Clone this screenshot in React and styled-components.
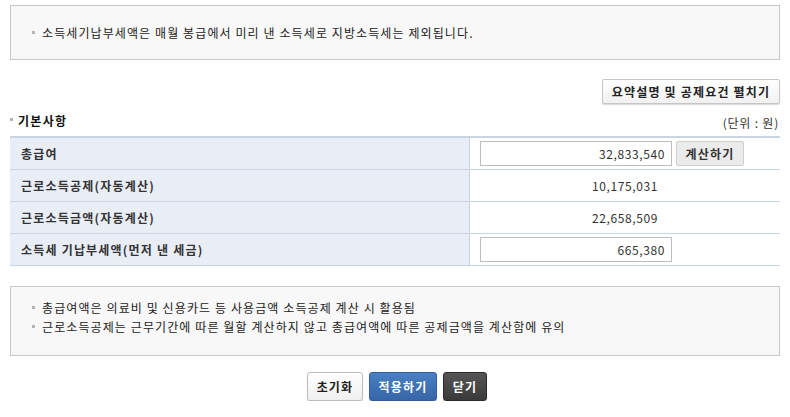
import React from "react";
import styled, { createGlobalStyle } from "styled-components";

const Global = createGlobalStyle`
  html, body { margin: 0; padding: 0; background: #fff; }
  body { font-family: "Noto Sans CJK KR", "Noto Sans", sans-serif; font-size: 12px; color: #333; }
  * { box-sizing: border-box; }
`;

const Page = styled.div`
  padding: 5px 10px 0 10px;
  width: 790px;
`;

const NoticeBox = styled.div`
  border: 1px solid #c8c8c8;
  background: #f8f8f8;
  padding: ${(p) => p.$pad || "17px 20px"};
  margin-top: ${(p) => p.$mt || 0}px;
  display: flex;
  flex-direction: column;
  gap: 2px;
`;

const Bullet = styled.div`
  position: relative;
  padding-left: 11px;
  line-height: 17px;
  font-size: 12px;
  color: #222;
  letter-spacing: 1.1px;
  &::before {
    content: "";
    position: absolute;
    left: 1px;
    top: 7px;
    width: 3px;
    height: 3px;
    background: #b4b4b4;
  }
`;

const ToolRow = styled.div`
  display: flex;
  justify-content: flex-end;
  margin-top: 19px;
`;

const GrayButton = styled.button`
  font-family: inherit;
  font-weight: bold;
  font-size: 12px;
  letter-spacing: 1.2px;
  color: #222;
  width: 178px;
  height: 25px;
  padding: 0;
  border: 1px solid #c6c6c6;
  border-radius: 2px;
  background: linear-gradient(#ffffff, #f1f1f1);
  box-shadow: 0 1px 1px rgba(0, 0, 0, 0.15);
  cursor: pointer;
`;

const HeadRow = styled.div`
  display: flex;
  justify-content: space-between;
  align-items: center;
  margin-top: 6px;
  height: 26px;
  padding-bottom: 5px;
`;

const Heading = styled.div`
  position: relative;
  padding-left: 8px;
  font-weight: bold;
  font-size: 12px;
  letter-spacing: 1.3px;
  color: #111;
  &::before {
    content: "";
    position: absolute;
    left: 0;
    top: 6px;
    width: 3px;
    height: 3px;
    background: #b4b4b4;
  }
`;

const Unit = styled.div`
  font-size: 12px;
  letter-spacing: 0.8px;
  color: #333;
  padding-top: 4px;
  padding-right: 1px;
`;

const Table = styled.div`
  display: grid;
  grid-template-columns: 460px 1fr;
  border-top: 2px solid #cbd4e1;
`;

const Label = styled.div`
  background: #e9edf6;
  border-right: 1px solid #c9d3e0;
  border-bottom: 1px solid #c9d3e0;
  height: 32px;
  display: flex;
  align-items: center;
  padding-left: 11px;
  font-weight: bold;
  font-size: 12px;
  letter-spacing: 1.2px;
  color: #333;
`;

const Cell = styled.div`
  border-bottom: 1px solid #c9d3e0;
  height: 32px;
  display: flex;
  align-items: center;
  justify-content: ${(p) => (p.$center ? "center" : "flex-start")};
  padding-left: ${(p) => (p.$center ? 0 : 10)}px;
  gap: 4px;
  font-size: 12px;
  letter-spacing: 0.6px;
  color: #333;
`;

const NumInput = styled.input`
  width: 192px;
  height: 25px;
  border: 1px solid #bdbdbd;
  text-align: right;
  padding: 0 6px;
  font-family: inherit;
  font-size: 12px;
  letter-spacing: 0.6px;
  color: #333;
  outline: none;
`;

const CalcButton = styled.button`
  font-family: inherit;
  font-weight: bold;
  font-size: 12px;
  letter-spacing: 1.2px;
  color: #333;
  width: 68px;
  height: 25px;
  padding: 0;
  border: 1px solid #cfcfcf;
  border-radius: 2px;
  background: #ebebeb;
  cursor: pointer;
`;

const Footer = styled.div`
  display: flex;
  justify-content: center;
  gap: 6px;
  margin-top: 16px;
  padding-left: 4px;
`;

const ActionButton = styled.button`
  font-family: inherit;
  font-weight: bold;
  font-size: 12px;
  letter-spacing: 1.2px;
  width: ${(p) => p.$w}px;
  height: 29px;
  padding: 0;
  border-radius: 3px;
  cursor: pointer;
  color: ${(p) => (p.$variant === "light" ? "#222" : "#fff")};
  border: 1px solid
    ${(p) =>
      p.$variant === "blue" ? "#2f5f9e" : p.$variant === "dark" ? "#2a2a2a" : "#bdbdbd"};
  background: ${(p) =>
    p.$variant === "blue"
      ? "linear-gradient(#4a7fc1, #3566a8)"
      : p.$variant === "dark"
      ? "linear-gradient(#555, #3a3a3a)"
      : "linear-gradient(#ffffff, #f0f0f0)"};
  box-shadow: 0 2px 1px rgba(0, 0, 0, 0.18);
`;

export default function App() {
  return (
    <Page>
      <Global />
      <NoticeBox $pad="18px 20px 18px 20px">
        <Bullet>소득세기납부세액은 매월 봉급에서 미리 낸 소득세로 지방소득세는 제외됩니다.</Bullet>
      </NoticeBox>

      <ToolRow>
        <GrayButton>요약설명 및 공제요건 펼치기</GrayButton>
      </ToolRow>

      <HeadRow>
        <Heading>기본사항</Heading>
        <Unit>(단위 : 원)</Unit>
      </HeadRow>

      <Table>
        <Label>총급여</Label>
        <Cell>
          <NumInput defaultValue="32,833,540" />
          <CalcButton>계산하기</CalcButton>
        </Cell>
        <Label>근로소득공제(자동계산)</Label>
        <Cell $center>10,175,031</Cell>
        <Label>근로소득금액(자동계산)</Label>
        <Cell $center>22,658,509</Cell>
        <Label>소득세 기납부세액(먼저 낸 세금)</Label>
        <Cell>
          <NumInput defaultValue="665,380" />
        </Cell>
      </Table>

      <NoticeBox $pad="12px 20px 20px 20px" $mt={20}>
        <Bullet>총급여액은 의료비 및 신용카드 등 사용금액 소득공제 계산 시 활용됨</Bullet>
        <Bullet>근로소득공제는 근무기간에 따른 월할 계산하지 않고 총급여액에 따른 공제금액을 계산함에 유의</Bullet>
      </NoticeBox>

      <Footer>
        <ActionButton $variant="light" $w={56}>초기화</ActionButton>
        <ActionButton $variant="blue" $w={68}>적용하기</ActionButton>
        <ActionButton $variant="dark" $w={44}>닫기</ActionButton>
      </Footer>
    </Page>
  );
}
